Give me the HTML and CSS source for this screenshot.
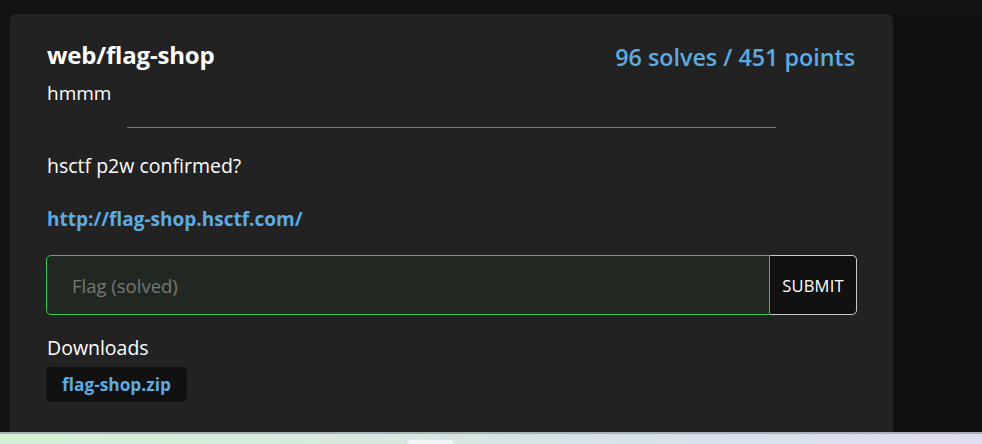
FILE: index.html
```html
<!DOCTYPE html>
<html>
<head>
<meta charset="utf-8">
<link rel="stylesheet" href="styles.css">
</head>
<body>
<div class="screen">
  <main class="page">
    <section class="card">
      <div class="head">
        <div class="titles">
          <h1 class="title">web/flag-shop</h1>
          <div class="author">hmmm</div>
        </div>
        <div class="score">96 solves / 451 points</div>
      </div>
      <hr class="rule">
      <p class="desc">hsctf p2w confirmed?</p>
      <p class="desc"><a class="link" href="#">http://flag-shop.hsctf.com/</a></p>
      <form class="flagform">
        <input class="flag" type="text" placeholder="Flag (solved)">
        <button class="submit" type="button">SUBMIT</button>
      </form>
      <div class="downloads">Downloads</div>
      <a class="chip" href="#">flag-shop.zip</a>
    </section>
    <div class="side"></div>
  </main>
  <footer class="taskbar"><span class="tab"></span></footer>
</div>
</body>
</html>
```

FILE: styles.css
```css
* { box-sizing: border-box; }
html, body { margin: 0; padding: 0; height: 100%; }
body {
  background: #121212;
  font-family: "Open Sans", "Noto Sans", sans-serif;
  color: #fff;
  overflow: hidden;
}
.screen { height: 444px; display: flex; flex-direction: column; }
.page {
  flex: 1;
  display: flex;
  padding: 14px 0 0 10px;
  background: #131313;
}
.side { flex: 1; background: #111; }
.card {
  width: 883px;
  background: #222;
  border-radius: 6px 6px 0 0;
  padding: 26px 36px 0 36px;
}
.head { display: flex; justify-content: space-between; align-items: flex-start; }
.title {
  margin: 0;
  padding-left: 1px;
  font-size: 24px;
  font-weight: 700;
  line-height: 30px;
  letter-spacing: -0.2px;
}
.author { margin-top: 10px; padding-left: 1px; font-size: 19px; line-height: 26px; }
.score {
  margin-top: 2px;
  margin-right: 2px;
  color: #5dabe3;
  font-size: 23.3px;
  font-weight: 600;
  line-height: 30px;
}
.rule {
  width: 80%;
  margin: 21px auto 0;
  border: 0;
  border-top: 1px solid #777;
}
.desc { margin: 24px 0 0; padding-left: 1px; font-size: 19.5px; line-height: 28px; }
.desc + .desc { margin-top: 25px; }
.link { color: #5dabe3; font-weight: 700; text-decoration: none; font-size: 19px; }
.flagform { display: flex; margin-top: 22px; height: 60px; }
.flag {
  flex: 1;
  background: #212821;
  border: 1px solid #2ecc55;
  border-radius: 5px 0 0 5px;
  padding: 0 25px;
  font-family: inherit;
  font-size: 18.5px;
  color: #fff;
  outline: none;
}
.flag::placeholder { color: #777; }
.submit {
  width: 87px;
  background: #111;
  color: #fff;
  border: 1px solid #ccc;
  border-left: 0;
  border-radius: 0 5px 5px 0;
  font-family: inherit;
  font-size: 16.5px;
  letter-spacing: 0.2px;
  padding: 0;
}
.downloads { margin-top: 20px; padding-left: 1px; font-size: 19.5px; line-height: 26px; }
.chip {
  display: inline-block;
  margin-top: 6px;
  padding: 0 16px;
  height: 35px;
  line-height: 35px;
  background: #111;
  border-radius: 5px;
  color: #5dabe3;
  font-weight: 700;
  font-size: 17.3px;
  text-decoration: none;
}
.taskbar {
  height: 12px;
  flex: none;
  border-top: 2px solid #a9b0b6;
  background: linear-gradient(90deg, #d4f0d2 0%, #d8e8de 35%, #d6e2ea 65%, #e0def0 100%);
  position: relative;
}
.tab {
  position: absolute;
  left: 407px;
  top: 6px;
  width: 47px;
  height: 10px;
  background: #f2f5f8;
  border-radius: 4px 4px 0 0;
}
```
